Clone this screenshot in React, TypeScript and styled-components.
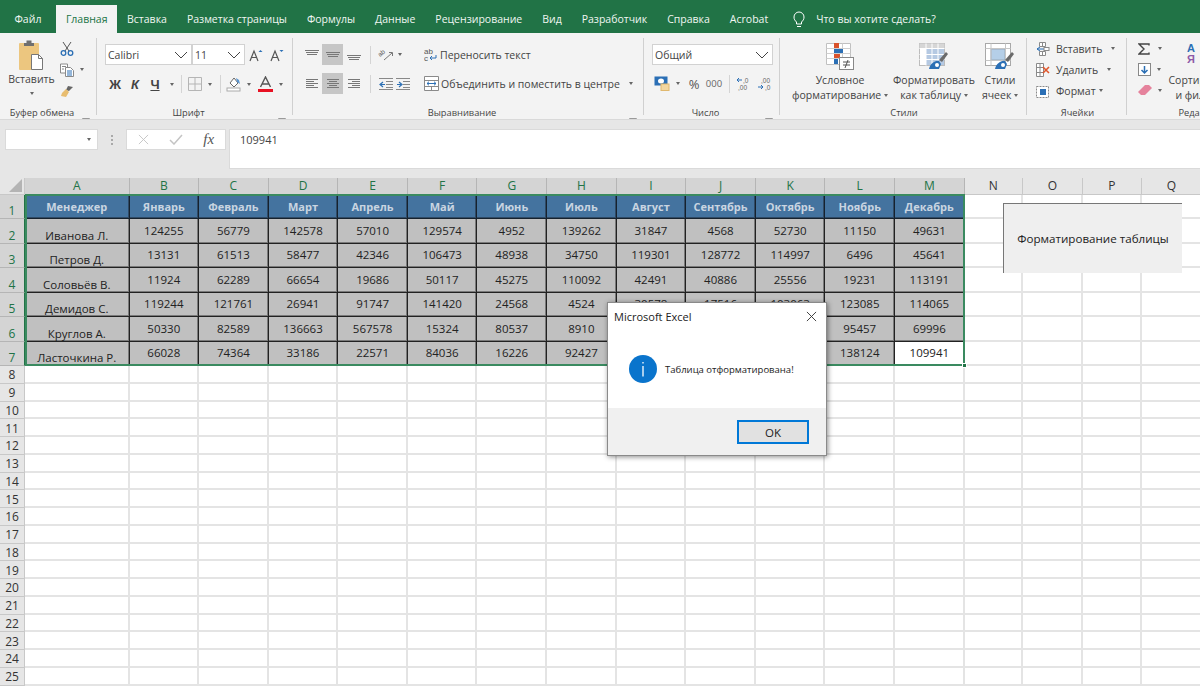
import React from "react";
import styled, { createGlobalStyle } from "styled-components";

const UI = `"Open Sans", "Noto Sans", "Liberation Sans", sans-serif`;

const Global = createGlobalStyle`
  html, body { margin: 0; padding: 0; background: #fff; }
  * { box-sizing: border-box; }
`;

const Page = styled.div`
  width: 1200px; height: 687px; overflow: hidden; position: relative;
  font-family: ${UI}; color: #333; background: #fff;
`;

/* ---------- tabs ---------- */
const TabBar = styled.div`
  height: 33px; background: #217346; display: flex; align-items: flex-end; padding-left: 4.5px;
`;
const Tab = styled.div<{ $active?: boolean }>`
  height: ${p => (p.$active ? 28 : 33)}px; padding: ${p => (p.$active ? "0 9.5px" : "5px 10px 0")};
  margin-left: ${p => (p.$active ? 5 : 0)}px;
  display: flex; align-items: center; font-size: 10.5px; white-space: nowrap;
  background: ${p => (p.$active ? "#f3f3f3" : "transparent")};
  color: ${p => (p.$active ? "#217346" : "#f0f6f2")};
`;
const TellMe = styled.div`
  display: flex; align-items: center; gap: 11px; height: 33px; padding: 5px 0 0 15px;
  font-size: 10.5px; color: #f0f6f2;
`;

/* ---------- ribbon ---------- */
const Ribbon = styled.div`
  height: 87px; background: #f3f3f3; border-bottom: 1px solid #d9d9d9;
  display: flex; align-items: flex-start; padding-top: 5px; overflow: hidden;
`;
const Group = styled.div<{ $w: number; $last?: boolean }>`
  width: ${p => p.$w}px; flex: none; height: 77px; display: flex; flex-direction: column;
  border-right: ${p => (p.$last ? "none" : "1px solid #d0d0d0")};
`;
const GroupBody = styled.div`
  height: 67px; display: flex; flex: none;
`;
const Stack = styled.div<{ $pad?: number; $gap?: number; $top?: number; $w?: number }>`
  display: flex; flex-direction: column; flex: none;
  padding-left: ${p => p.$pad ?? 0}px; padding-top: ${p => p.$top ?? 6}px; gap: ${p => p.$gap ?? 8}px;
  ${p => (p.$w ? `width: ${p.$w}px;` : "")}
`;
const Row = styled.div<{ $h?: number }>`
  display: flex; align-items: center; height: ${p => p.$h ?? 21}px; flex: none;
`;
const Slot = styled.div<{ $w: number; $on?: boolean; $h?: number }>`
  width: ${p => p.$w}px; height: ${p => p.$h ?? 21}px; flex: none; display: flex; align-items: center; justify-content: center;
  background: ${p => (p.$on ? "#c6c6c6" : "transparent")};
`;
const VSep = styled.div<{ $m?: number; $r?: number }>`
  width: 1px; height: 18px; background: #d4d4d4; flex: none;
  margin: 0 ${p => p.$r ?? p.$m ?? 6}px 0 ${p => p.$m ?? 6}px;
`;
const LabelRow = styled.div`
  height: 10px; display: flex; padding-left: 2px;
`;
const GroupLabel = styled.div`
  flex: 1; height: 14px; text-align: center; font-size: 9.3px; line-height: 15px; color: #444; white-space: nowrap;
`;
const LauncherBox = styled.div`
  width: 14px; flex: none; padding-top: 4px;
`;
const Combo = styled.div<{ $w: number }>`
  width: ${p => p.$w}px; height: 21px; background: #fff; border: 1px solid #d2d2d2; flex: none;
  display: flex; align-items: center; justify-content: space-between; padding: 0 3px 0 2px;
  font-size: 10.5px; color: #444;
`;
const Caret = styled.span<{ $m?: number }>`
  width: 0; height: 0; flex: none; display: inline-block; vertical-align: middle;
  border-left: 2.5px solid transparent; border-right: 2.5px solid transparent; border-top: 3px solid #666;
  margin-left: ${p => p.$m ?? 0}px;
`;
const RibbonText = styled.span<{ $m?: number }>`
  font-size: 10.5px; color: #444; white-space: nowrap; margin-left: ${p => p.$m ?? 0}px;
`;
const Letter = styled.span<{ $i?: boolean; $u?: boolean }>`
  font-family: "Liberation Sans", sans-serif; font-size: 13px; font-weight: 700; color: #444;
  font-style: ${p => (p.$i ? "italic" : "normal")};
  text-decoration: ${p => (p.$u ? "underline" : "none")};
`;
const PasteBtn = styled.div`
  width: 54px; padding-left: 9px; flex: none; display: flex; flex-direction: column; align-items: center;
  padding-top: 1px;
`;
const BigText = styled.div`
  font-size: 10.5px; line-height: 15px; color: #444; text-align: center; white-space: nowrap;
`;
const BigBtn = styled.div<{ $w: number; $pad?: number }>`
  width: ${p => p.$w + (p.$pad ?? 0)}px; padding-left: ${p => p.$pad ?? 0}px; flex: none;
  display: flex; flex-direction: column; align-items: center; padding-top: 1px;
`;
const IconSpace = styled.div`
  height: 33.5px; padding-top: 4px; display: flex; align-items: flex-start; justify-content: center;
`;
const PercentSign = styled.span`
  font-size: 13px; color: #555;
`;
const Thousands = styled.span`
  font-size: 9.5px; color: #666;
`;

/* ---------- formula bar ---------- */
const FormulaBar = styled.div`
  height: 58px; background: #e6e6e6; display: flex; align-items: flex-start; padding: 9px 0 0 5px;
`;
const NameBox = styled.div`
  width: 93px; height: 21px; background: #fff; border: 1px solid #dadada; display: flex; align-items: center;
  justify-content: flex-end; padding-right: 6px; flex: none;
`;
const Dots = styled.div`
  width: 28px; flex: none; height: 21px; display: flex; flex-direction: column; align-items: center; justify-content: center; gap: 2px;
`;
const Dot = styled.i`
  width: 2px; height: 2px; background: #a9a9a9; display: block;
`;
const FxBox = styled.div`
  width: 100px; height: 21px; background: #fff; border: 1px solid #dadada; display: flex; align-items: center; flex: none;
`;
const FxSlot = styled.div`
  width: 33px; display: flex; justify-content: center; align-items: center;
`;
const FxText = styled.span`
  font-family: "Liberation Serif", serif; font-style: italic; font-size: 15px; color: #555;
`;
const FormulaInput = styled.div`
  margin-left: 3px; flex: 1; height: 40px; background: #fff; border: 1px solid #dadada; border-right: none;
  font-size: 11px; padding: 2px 0 0 10px; color: #444;
`;

/* ---------- sheet ---------- */
const Sheet = styled.div`
  position: relative; display: grid;
  grid-template-columns: 25px 104.5px repeat(12, 69.6px) 58.3px 59.8px 59.2px 60px;
  grid-template-rows: 16.5px 24.5px repeat(6, 24.5px) repeat(18, 17.76px);
  font-family: "Open Sans", sans-serif; font-size: 11.5px; color: #222;
`;
const Corner = styled.div`
  background: #e6e6e6; border-right: 1px solid #c8c8c8; border-bottom: 1px solid #c8c8c8;
  display: flex; align-items: flex-end; justify-content: flex-end; padding: 0 2px 2px 0;
`;
const ColHead = styled.div<{ $sel?: boolean }>`
  display: flex; align-items: center; justify-content: center; font-size: 12px;
  background: ${p => (p.$sel ? "#d4d4d4" : "#e6e6e6")};
  color: ${p => (p.$sel ? "#217346" : "#333")};
  border-right: 1px solid ${p => (p.$sel ? "#b5b5b5" : "#c8c8c8")};
  border-bottom: 1px solid ${p => (p.$sel ? "#217346" : "#c8c8c8")};
`;
const RowHead = styled.div<{ $sel?: boolean }>`
  display: flex; align-items: center; justify-content: center; font-size: 12px; padding-top: ${p => (p.$sel ? 9 : 1)}px;
  background: ${p => (p.$sel ? "#d4d4d4" : "#e6e6e6")};
  color: ${p => (p.$sel ? "#217346" : "#333")};
  border-right: 1px solid ${p => (p.$sel ? "#217346" : "#c8c8c8")};
  border-bottom: 1px solid ${p => (p.$sel ? "#b5b5b5" : "#c8c8c8")};
`;
const HeadCell = styled.div`
  background: #44739f; color: #c9d5e1; font-weight: 700; font-size: 11px;
  display: flex; align-items: center; justify-content: center;
  border-right: 1px solid #16222e; border-bottom: 1px solid #16222e;
  box-shadow: inset -1px -1px 0 #2f4a66; white-space: nowrap;
`;
const DataCell = styled.div<{ $white?: boolean; $name?: boolean }>`
  background: ${p => (p.$white ? "#fff" : "#c0c0c0")}; white-space: nowrap;
  display: flex; justify-content: center; font-size: 11.5px;
  align-items: ${p => (p.$name ? "flex-end" : "center")};
  padding: ${p => (p.$name ? "0" : "0 0 1px")};
  border-right: 1px solid #222; border-bottom: 1px solid #222;
  box-shadow: inset -1px -1px 0 #7a7a7a;
`;
const BlankCell = styled.div`
  background: #fff; border-right: 2px solid #e4e4e4; border-bottom: 2px solid #e4e4e4;
`;
const Selection = styled.div`
  position: absolute; left: 25px; top: 16px; width: 939.5px; height: 172px; border: 2px solid #3a8a60; pointer-events: none;
`;
const Handle = styled.div`
  position: absolute; right: -4px; bottom: -4px; width: 5px; height: 5px; background: #217346; border: 1px solid #fff;
`;
const ShapeButton = styled.div`
  position: absolute; left: 1003px; top: 25px; width: 179px; height: 70px; background: #efefef;
  border-top: 1px solid #777; border-left: 1px solid #777;
  display: flex; align-items: center; justify-content: center; font-size: 11.6px; color: #222;
`;

/* ---------- dialog ---------- */
const Dialog = styled.div`
  position: absolute; left: 607px; top: 302px; width: 220px; height: 154px; background: #fff;
  border: 1px solid #8a8a8a; box-shadow: 1px 1px 5px rgba(0,0,0,.45);
  display: flex; flex-direction: column;
`;
const DialogTitle = styled.div`
  height: 27px; display: flex; align-items: center; justify-content: space-between; padding: 0 9px 0 6px; font-size: 11px; color: #222; flex: none;
`;
const DialogBody = styled.div`
  flex: 1; display: flex; align-items: center; gap: 8px; padding: 0 0 0 21px; font-size: 9.5px; color: #222;
`;
const DialogFoot = styled.div`
  height: 47px; flex: none; background: #f0f0f0; display: flex; justify-content: flex-end; align-items: flex-start; padding: 12px 17px 0 0;
`;
const OkButton = styled.div`
  width: 72px; height: 24px; background: #e1e1e1; border: 2px solid #0078d7; display: flex; align-items: center; justify-content: center;
  font-size: 11.5px; color: #222;
`;

/* ---------- icons ---------- */
const Launcher = () => (
  <svg width="8" height="8" viewBox="0 0 8 8"><path d="M.5 7.500v-7h7v7z" fill="none" stroke="#9a9a9a" /><path d="M3 3l3 3M6 3.500V6H3.500" fill="none" stroke="#666" /></svg>
);
const Chevron = () => (
  <svg width="14" height="8" viewBox="0 0 14 8"><path d="M1 1l6 6 6-6" fill="none" stroke="#444" /></svg>
);
const PasteIcon = () => (
  <svg width="28" height="33" viewBox="0 0 28 33">
    <rect x="1" y="4" width="20" height="27" rx="1" fill="#ecc67f" />
    <path d="M6 4h10v3H6zM8.500 1.500h5v3h-5z" fill="#6f6f6f" />
    <path d="M13.500 15.500h7l4 4v11h-11z" fill="#fff" stroke="#777" />
    <path d="M20.500 15.500v4h4" fill="none" stroke="#777" />
  </svg>
);
const Scissors = () => (
  <svg width="14" height="15" viewBox="0 0 14 15">
    <path d="M3 1l6 9M11 1L5 10" stroke="#555" fill="none" />
    <circle cx="3.500" cy="12" r="2.300" fill="none" stroke="#2b6fb5" strokeWidth="1.300" /><circle cx="10.500" cy="12" r="2.300" fill="none" stroke="#2b6fb5" strokeWidth="1.300" />
  </svg>
);
const CopyIcon = () => (
  <svg width="14" height="14" viewBox="0 0 14 14">
    <path d="M.5 1h7v9h-7z" fill="#fff" stroke="#8a8a8a" /><path d="M5.500 4.500h5l3 3v6h-8z" fill="#fff" stroke="#8a8a8a" />
    <path d="M7 8h5M7 10h5M7 12h5" stroke="#2b6fb5" /><path d="M2 3.500h4M2 6h2" stroke="#888" />
  </svg>
);
const BrushIcon = () => (
  <svg width="14" height="13" viewBox="0 0 14 13">
    <path d="M8 1l5 1-4 4-3-1z" fill="#666" /><path d="M6 4l3 3-3 5-5-1 1-3z" fill="#e8bd70" />
  </svg>
);
const AGrow = ({ down }: { down?: boolean }) => (
  <svg width="14" height="14" viewBox="0 0 14 14">
    <path d="M1 13L5 3l4 10M2.700 9.500h4.600" fill="none" stroke="#555" strokeWidth="1.200" />
    <path d={down ? "M9.500 2h4l-2 2z" : "M9.500 4h4l-2-2z"} fill="#2b6fb5" />
  </svg>
);
const BorderIcon = () => (
  <svg width="14" height="14" viewBox="0 0 14 14"><path d="M.5.500h13v13H.5zM7 .500v13M.5 7h13" fill="none" stroke="#b5b5b5" /></svg>
);
const FillIcon = () => (
  <svg width="16" height="16" viewBox="0 0 16 16">
    <path d="M4 7l4-5 4 5-4 4z" fill="#fff" stroke="#666" /><path d="M10 2l3 2 1 4-3-2z" fill="#5a95cf" />
    <rect x="1" y="12" width="13" height="3" fill="#fff" stroke="#aaa" />
  </svg>
);
const FontColor = () => (
  <svg width="15" height="16" viewBox="0 0 15 16">
    <path d="M2.500 11L7.500 1l5 10M4 8h7" fill="none" stroke="#555" strokeWidth="1.400" /><rect y="13" width="15" height="3" fill="#e81123" />
  </svg>
);
const AlignV = ({ y }: { y: number }) => (
  <svg width="14" height="12" viewBox="0 0 14 12">
    <path d={`M0 ${y}.5h14M1 ${y + 2}.5h12M2 ${y + 4}.5h10`} stroke="#777" fill="none" />
  </svg>
);
const AlignH = ({ kind }: { kind: "l" | "c" | "r" }) => {
  const s = (w: number) => (kind === "l" ? 0 : kind === "c" ? (12 - w) / 2 : 12 - w);
  const ws = [12, 8, 12, 8, 12];
  return (
    <svg width="12" height="11" viewBox="0 0 12 11">
      {ws.map((w, i) => (<path key={i} d={`M${s(w)} ${i * 2 + 1}.5h${w}`} stroke="#777" />))}
    </svg>
  );
};
const Orient = () => (
  <svg width="17" height="15" viewBox="0 0 17 15">
    <text x="0" y="0" fontSize="6.500" fontFamily="Liberation Sans" fill="#555" transform="translate(2 10) rotate(-40)">ab</text>
    <path d="M6 13l8-7M11 5.500h3.500V9" stroke="#777" fill="none" />
  </svg>
);
const Indent = ({ flip }: { flip?: boolean }) => (
  <svg width="14" height="12" viewBox="0 0 14 12">
    <path d="M0 .500h14M7 3.500h7M7 6.500h7M7 9.500h7M0 11.500h14" stroke="#888" />
    <path d={flip ? "M1 6.500h4M3 4l3 2.500L3 9" : "M6 6.500H2M4 4L1 6.500 4 9"} stroke="#2b6fb5" strokeWidth="1.200" fill="none" />
  </svg>
);
const WrapIcon = () => (
  <svg width="13" height="15" viewBox="0 0 13 15">
    <text x="0" y="6.500" fontSize="8" fontFamily="Liberation Sans" fill="#555">ab</text>
    <text x="0" y="14" fontSize="8" fontFamily="Liberation Sans" fill="#555">c</text>
    <path d="M12 8v3H6M8 9l-2 2 2 2" stroke="#2b6fb5" fill="none" />
  </svg>
);
const MergeIcon = () => (
  <svg width="15" height="15" viewBox="0 0 15 15">
    <path d="M.5.500h14v14H.5zM.5 4.500h14M.5 10.500h14M7.500 10.500v4" fill="#fff" stroke="#8a8a8a" />
    <path d="M3 7.500h9M5 5.700L3 7.500l2 1.800M10 5.700l2 1.800-2 1.800" stroke="#2b6fb5" fill="none" />
  </svg>
);
const MoneyIcon = () => (
  <svg width="16" height="15" viewBox="0 0 16 15">
    <rect x=".5" y=".5" width="13" height="9" fill="#2b6fb5" /><ellipse cx="7" cy="5" rx="3" ry="2.500" fill="#fff" />
    <rect x="7" y="8" width="8" height="6.500" fill="#f3d7a0" stroke="#e0b86e" />
  </svg>
);
const DecIcon = ({ up }: { up?: boolean }) => (
  <svg width="15" height="14" viewBox="0 0 15 14">
    <text x={up ? 3 : 7} y="6" fontSize="6.500" fontFamily="Liberation Sans" fill="#666">{up ? ",00" : ",0"}</text>
    <text x={up ? 7 : 2} y="13" fontSize="6.500" fontFamily="Liberation Sans" fill="#666">{up ? ",0" : ",00"}</text>
    <path d={up ? "M0 10h5M3 8l2 2-2 2" : "M6 3H1M3 1L1 3l2 2"} stroke="#2b6fb5" fill="none" />
  </svg>
);
const CondIcon = () => (
  <svg width="28" height="27" viewBox="0 0 28 27">
    <path d="M.5.500h24v21H.5z" fill="#fff" stroke="#c0c0c0" />
    <path d="M.5 5.500h24M.5 10.500h24M.5 15.500h24M8.500.500v21M16.500.500v21" stroke="#cfcfcf" />
    <rect x="8" y="0" width="5" height="5" fill="#d9532c" /><rect x="8" y="6" width="9" height="4" fill="#2b6fb5" />
    <rect x="8" y="11" width="6" height="4" fill="#d9532c" /><rect x="8" y="16" width="4" height="5" fill="#2b6fb5" />
    <rect x="13.500" y="14.500" width="14" height="12" fill="#fff" stroke="#888" />
    <path d="M17 19h7M17 22h7M22 17l-3 8" stroke="#555" fill="none" />
  </svg>
);
const TableIcon = () => (
  <svg width="30" height="27" viewBox="0 0 30 27">
    <rect x=".5" y=".5" width="25" height="22" fill="#fff" stroke="#bcbcbc" />
    <rect x=".5" y=".5" width="25" height="5" fill="#d6d6d6" />
    <rect x="7" y="6" width="18" height="16" fill="#b5c9e2" />
    <path d="M.5 5.500h25M.5 11.500h25M.5 16.500h25M7 .500v22M13 .500v22M19 .500v22" stroke="#fff" />
    <path d="M20 17l7-8 2 2-6 8z" fill="#6a6a6a" /><path d="M10 26c1-5 6-9 10-8l2 3-2 5z" fill="#2b6fb5" /><circle cx="18" cy="22" r="2" fill="#fff" />
  </svg>
);
const CellStyleIcon = () => (
  <svg width="30" height="27" viewBox="0 0 30 27">
    <rect x=".5" y=".5" width="25" height="22" fill="#fff" stroke="#a8a8a8" />
    <rect x="6" y="6" width="14" height="11" fill="#b5cfe8" stroke="#9ab" />
    <path d="M.5 5.500h25M20.500.500v22M6 .500v22M.5 17.500h25" stroke="#c6c6c6" />
    <path d="M20 17l7-8 2 2-6 8z" fill="#6a6a6a" /><path d="M10 26c1-5 6-9 10-8l2 3-2 5z" fill="#2b6fb5" /><circle cx="18" cy="22" r="2" fill="#fff" />
  </svg>
);
const CellIcon = ({ kind }: { kind: "ins" | "del" | "fmt" }) => (
  <svg width="14" height="14" viewBox="0 0 14 14">
    {kind === "fmt" ? (
      <>
        <path d="M.5 2.500h12v11H.5z" fill="#fff" stroke="#8a8a8a" strokeDasharray="2 1" /><rect x="4" y="5" width="6" height="6" fill="#2b6fb5" />
      </>
    ) : kind === "ins" ? (
      <>
        <path d="M3.500.500h6v4h-6zM3.500 9.500h6v4h-6zM6.500.500v4M6.500 9.500v4" fill="#fff" stroke="#8a8a8a" />
        <path d="M1 7h12M4 5L1 7l3 2" stroke="#2b6fb5" fill="none" /><rect x="8" y="5.500" width="5" height="3" fill="#fff" stroke="#8a8a8a" />
      </>
    ) : (
      <>
        <path d="M.5.500h7v13h-7zM.5 4.500h7M.5 9.500h7M4 .500v13" fill="#fff" stroke="#8a8a8a" />
        <path d="M7 4l6 6M13 4l-6 6" stroke="#e0562b" strokeWidth="1.600" />
      </>
    )}
  </svg>
);
const Sigma = () => (
  <svg width="12" height="12" viewBox="0 0 12 12"><path d="M11 2.500V1H1l5 5-5 5h10V9.500" fill="none" stroke="#444" strokeWidth="1.400" /></svg>
);
const FillDown = () => (
  <svg width="13" height="13" viewBox="0 0 13 13"><rect x=".5" y=".5" width="12" height="12" fill="#fff" stroke="#888" /><path d="M6.500 3v7M3.500 7l3 3 3-3" stroke="#2b6fb5" strokeWidth="1.500" fill="none" /></svg>
);
const Eraser = () => (
  <svg width="14" height="11" viewBox="0 0 14 11"><path d="M0 7l7-7h4l3 3-7 7H3z" fill="#e5829c" /></svg>
);
const SortIcon = () => (
  <svg width="24" height="22" viewBox="0 0 24 22">
    <text x="0" y="9" fontSize="11" fontWeight="700" fontFamily="Liberation Sans" fill="#2b6fb5">A</text>
    <text x="0" y="20" fontSize="11" fontWeight="700" fontFamily="Liberation Sans" fill="#8e5aa8">Я</text>
    <path d="M13 5h8M15 3l-2 2 2 2" stroke="#777" fill="none" />
  </svg>
);
const Bulb = () => (
  <svg width="12" height="17" viewBox="0 0 12 17"><path d="M3.500 11C2 9.500 1 8.500 1 6a5 5 0 0 1 10 0c0 2.500-1 3.500-2.500 5v2h-5zM4 15.500h4" fill="none" stroke="#fff" /></svg>
);
const XMark = ({ c, s }: { c: string; s: number }) => (
  <svg width={s} height={s} viewBox="0 0 12 12"><path d="M1 1l10 10M11 1L1 11" stroke={c} /></svg>
);
const Check = () => (
  <svg width="14" height="11" viewBox="0 0 14 11"><path d="M1 6l4 4 8-9" fill="none" stroke="#c4c4c4" strokeWidth="1.500" /></svg>
);
const CornerTri = () => (
  <svg width="13" height="13" viewBox="0 0 13 13"><path d="M13 0v13H0z" fill="#b4b4b4" /></svg>
);
const InfoIcon = () => (
  <svg width="28" height="28" viewBox="0 0 28 28">
    <circle cx="14" cy="14" r="14" fill="#0a74cc" /><path d="M14 11v10.500M14 7v1.500" stroke="#fff" strokeWidth="1.300" />
  </svg>
);

/* ---------- data ---------- */
const months = ["Январь", "Февраль", "Март", "Апрель", "Май", "Июнь", "Июль", "Август", "Сентябрь", "Октябрь", "Ноябрь", "Декабрь"];
const rows: [string, (number | string)[]][] = [
  ["Иванова Л.", [124255, 56779, 142578, 57010, 129574, 4952, 139262, 31847, 4568, 52730, 11150, 49631]],
  ["Петров Д.", [13131, 61513, 58477, 42346, 106473, 48938, 34750, 119301, 128772, 114997, 6496, 45641]],
  ["Соловьёв В.", [11924, 62289, 66654, 19686, 50117, 45275, 110092, 42491, 40886, 25556, 19231, 113191]],
  ["Демидов С.", [119244, 121761, 26941, 91747, 141420, 24568, 4524, 30578, 17516, 103063, 123085, 114065]],
  ["Круглов А.", [50330, 82589, 136663, 567578, 15324, 80537, 8910, "", "", "", 95457, 69996]],
  ["Ласточкина Р.", [66028, 74364, 33186, 22571, 84036, 16226, 92427, "", "", "", 138124, 109941]],
];
const letters = "ABCDEFGHIJKLMNOPQ".split("");
const tabs = ["Файл", "Главная", "Вставка", "Разметка страницы", "Формулы", "Данные", "Рецензирование", "Вид", "Разработчик", "Справка", "Acrobat"];

const Foot = ({ label, launcher = true }: { label: string; launcher?: boolean }) => (
  <LabelRow>
    <GroupLabel>{label}</GroupLabel>
    {launcher && <LauncherBox><Launcher /></LauncherBox>}
  </LabelRow>
);

export default function App() {
  return (
    <Page>
      <Global />
      <TabBar>
        {tabs.map(t => <Tab key={t} $active={t === "Главная"}>{t}</Tab>)}
        <TellMe><Bulb />Что вы хотите сделать?</TellMe>
      </TabBar>

      <Ribbon>
        <Group $w={97}>
          <GroupBody>
            <PasteBtn>
              <PasteIcon />
              <BigText>Вставить</BigText>
              <Row $h={12}><Caret /></Row>
            </PasteBtn>
            <Stack $pad={6} $top={0} $gap={0}>
              <Row $h={21}><Scissors /></Row>
              <Row $h={21}><CopyIcon /><Caret $m={6} /></Row>
              <Row $h={22}><BrushIcon /></Row>
            </Stack>
          </GroupBody>
          <Foot label="Буфер обмена" />
        </Group>

        <Group $w={196}>
          <GroupBody>
            <Stack $pad={8}>
              <Row>
                <Combo $w={87}>Calibri<Chevron /></Combo>
                <Combo $w={53}>11<Chevron /></Combo>
                <Slot $w={22}><AGrow /></Slot>
                <Slot $w={20}><AGrow down /></Slot>
              </Row>
              <Row $h={22}>
                <Slot $w={20}><Letter>Ж</Letter></Slot>
                <Slot $w={20}><Letter $i>К</Letter></Slot>
                <Slot $w={20}><Letter $u>Ч</Letter></Slot>
                <Slot $w={13}><Caret /></Slot>
                <VSep $m={3} />
                <Slot $w={20}><BorderIcon /></Slot>
                <Slot $w={10}><Caret /></Slot>
                <VSep $m={5} />
                <Slot $w={16}><FillIcon /></Slot>
                <Slot $w={14}><Caret /></Slot>
                <Slot $w={18}><FontColor /></Slot>
                <Slot $w={14}><Caret /></Slot>
              </Row>
            </Stack>
          </GroupBody>
          <Foot label="Шрифт" />
        </Group>

        <Group $w={351}>
          <GroupBody>
            <Stack $pad={9} $w={123}>
              <Row>
                <Slot $w={20}><AlignV y={1} /></Slot>
                <Slot $w={21} $on><AlignV y={3} /></Slot>
                <Slot $w={21}><AlignV y={6} /></Slot>
                <VSep />
                <Slot $w={18}><Orient /></Slot>
                <Slot $w={10}><Caret /></Slot>
              </Row>
              <Row>
                <Slot $w={20}><AlignH kind="l" /></Slot>
                <Slot $w={21} $on><AlignH kind="c" /></Slot>
                <Slot $w={21}><AlignH kind="r" /></Slot>
                <VSep />
                <Slot $w={17}><Indent /></Slot>
                <Slot $w={17}><Indent flip /></Slot>
              </Row>
            </Stack>
            <Stack $pad={8}>
              <Row><WrapIcon /><RibbonText $m={3}>Переносить текст</RibbonText></Row>
              <Row><MergeIcon /><RibbonText $m={2}>Объединить и поместить в центре</RibbonText><Caret $m={9} /></Row>
            </Stack>
          </GroupBody>
          <Foot label="Выравнивание" />
        </Group>

        <Group $w={136}>
          <GroupBody>
            <Stack $pad={8}>
              <Row><Combo $w={121}>Общий<Chevron /></Combo></Row>
              <Row>
                <Slot $w={20}><MoneyIcon /></Slot>
                <Slot $w={12}><Caret /></Slot>
                <Slot $w={20}><PercentSign>%</PercentSign></Slot>
                <Slot $w={20}><Thousands>000</Thousands></Slot>
                <VSep $m={5} />
                <Slot $w={16}><DecIcon /></Slot>
                <Slot $w={28}><DecIcon up /></Slot>
              </Row>
            </Stack>
          </GroupBody>
          <Foot label="Число" />
        </Group>

        <Group $w={247}>
          <GroupBody>
            <BigBtn $w={104} $pad={8}>
              <IconSpace><CondIcon /></IconSpace>
              <BigText>Условное</BigText>
              <BigText>форматирование <Caret /></BigText>
            </BigBtn>
            <BigBtn $w={84}>
              <IconSpace><TableIcon /></IconSpace>
              <BigText>Форматировать</BigText>
              <BigText>как таблицу <Caret /></BigText>
            </BigBtn>
            <BigBtn $w={48}>
              <IconSpace><CellStyleIcon /></IconSpace>
              <BigText>Стили</BigText>
              <BigText>ячеек <Caret /></BigText>
            </BigBtn>
          </GroupBody>
          <Foot label="Стили" launcher={false} />
        </Group>

        <Group $w={100}>
          <GroupBody>
            <Stack $pad={9} $top={0} $gap={0}>
              <Row><CellIcon kind="ins" /><RibbonText $m={6}>Вставить</RibbonText><Caret $m={9} /></Row>
              <Row><CellIcon kind="del" /><RibbonText $m={6}>Удалить</RibbonText><Caret $m={9} /></Row>
              <Row><CellIcon kind="fmt" /><RibbonText $m={6}>Формат</RibbonText><Caret $m={3} /></Row>
            </Stack>
          </GroupBody>
          <Foot label="Ячейки" launcher={false} />
        </Group>

        <Group $w={176} $last>
          <GroupBody>
            <Stack $pad={11} $top={0} $gap={0} $w={44}>
              <Row><Sigma /><Caret $m={8} /></Row>
              <Row><FillDown /><Caret $m={6} /></Row>
              <Row><Eraser /><Caret $m={6} /></Row>
            </Stack>
            <BigBtn $w={56}>
              <IconSpace><SortIcon /></IconSpace>
              <BigText>Сортировка</BigText>
              <BigText>и фильтр</BigText>
            </BigBtn>
          </GroupBody>
          <Foot label="Редактирование" launcher={false} />
        </Group>
      </Ribbon>

      <FormulaBar>
        <NameBox><Caret /></NameBox>
        <Dots><Dot /><Dot /><Dot /></Dots>
        <FxBox>
          <FxSlot><XMark c="#c4c4c4" s={11} /></FxSlot>
          <FxSlot><Check /></FxSlot>
          <FxSlot><FxText>fx</FxText></FxSlot>
        </FxBox>
        <FormulaInput>109941</FormulaInput>
      </FormulaBar>

      <Sheet>
        <Corner><CornerTri /></Corner>
        {letters.map((l, i) => <ColHead key={l} $sel={i < 13}>{l}</ColHead>)}

        <RowHead $sel>1</RowHead>
        <HeadCell>Менеджер</HeadCell>
        {months.map(m => <HeadCell key={m}>{m}</HeadCell>)}
        {[0, 1, 2, 3].map(i => <BlankCell key={i} />)}

        {rows.map(([name, vals], r) => (
          <React.Fragment key={name}>
            <RowHead $sel>{r + 2}</RowHead>
            <DataCell $name>{name}</DataCell>
            {vals.map((v, c) => <DataCell key={c} $white={r === 5 && c === 11}>{v}</DataCell>)}
            {[0, 1, 2, 3].map(i => <BlankCell key={i} />)}
          </React.Fragment>
        ))}

        {Array.from({ length: 18 }, (_, r) => (
          <React.Fragment key={r}>
            <RowHead>{r + 8}</RowHead>
            {letters.map(l => <BlankCell key={l} />)}
          </React.Fragment>
        ))}

        <Selection><Handle /></Selection>
        <ShapeButton>Форматирование таблицы</ShapeButton>
      </Sheet>

      <Dialog>
        <DialogTitle>Microsoft Excel<XMark c="#333" s={11} /></DialogTitle>
        <DialogBody><InfoIcon />Таблица отформатирована!</DialogBody>
        <DialogFoot><OkButton>OK</OkButton></DialogFoot>
      </Dialog>
    </Page>
  );
}
